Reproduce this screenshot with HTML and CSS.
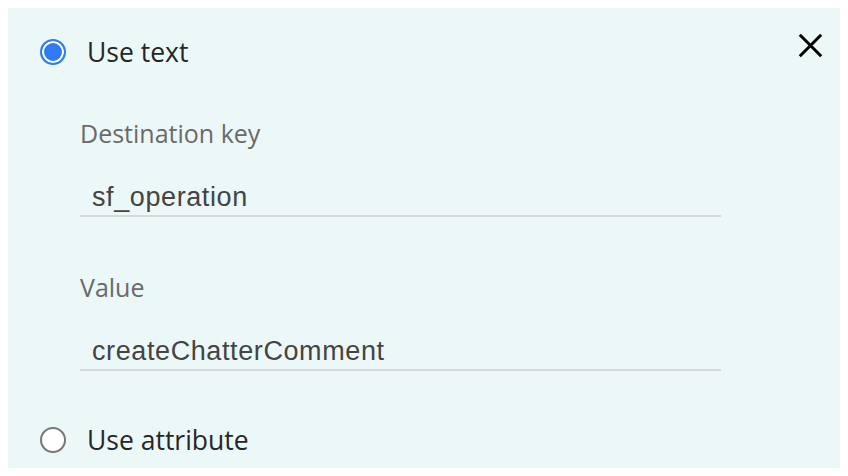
FILE: index.html
```html
<!DOCTYPE html>
<html lang="en">
<head>
<meta charset="utf-8">
<title>Use text</title>
<link rel="stylesheet" href="styles.css">
</head>
<body>
<div class="panel">
  <div class="option-row">
    <label class="option">
      <span class="radio radio-checked"></span>
      <span class="option-text">Use text</span>
    </label>
    <button class="close" aria-label="Close">
      <svg width="25" height="25" viewBox="0 0 25 25"><path d="M1.8 1.8 L23.2 23.2 M23.2 1.8 L1.8 23.2" stroke="#000" stroke-width="3" fill="none"/></svg>
    </button>
  </div>
  <div class="fields">
    <div class="field">
      <div class="field-label">Destination key</div>
      <input class="field-input" type="text" value="sf_operation" readonly>
    </div>
    <div class="field field-second">
      <div class="field-label">Value</div>
      <input class="field-input" type="text" value="createChatterComment" readonly>
    </div>
  </div>
  <div class="option-row option-last">
    <label class="option">
      <span class="radio"></span>
      <span class="option-text">Use attribute</span>
    </label>
  </div>
</div>
</body>
</html>
```

FILE: styles.css
```css
html, body {
  margin: 0;
  padding: 0;
  background: #ffffff;
}
body {
  margin: 8px;
}
.panel {
  box-sizing: border-box;
  width: 832px;
  height: 460px;
  background: #ecf8f8;
  padding: 26px 17px 0 32px;
}
.option-row {
  display: flex;
  align-items: center;
  justify-content: space-between;
  height: 36px;
}
.option {
  display: flex;
  align-items: center;
  gap: 21px;
}
.radio {
  box-sizing: border-box;
  width: 26px;
  height: 26px;
  border-radius: 50%;
  border: 2px solid #767676;
  background: #ffffff;
  flex: none;
}
.radio-checked {
  border: 2.7px solid #2f7bf5;
  background: #2f7bf5;
  box-shadow: inset 0 0 0 2px #ffffff;
}
.option-text {
  font-family: "Open Sans", sans-serif;
  font-size: 26.5px;
  font-weight: 500;
  line-height: 36px;
  color: #262626;
}
.close {
  border: none;
  background: transparent;
  padding: 0;
  margin: 0;
  width: 25px;
  height: 25px;
  display: flex;
  margin-top: -14px;
}
.fields {
  padding-left: 40px;
  margin-top: 46px;
  width: 641px;
}
.field {
  display: flex;
  flex-direction: column;
}
.field-second {
  margin-top: 53px;
}
.field-label {
  font-family: "Open Sans", sans-serif;
  font-size: 25px;
  line-height: 34px;
  color: #6a6a6a;
  margin-bottom: 29px;
}
.field-input {
  box-sizing: border-box;
  width: 641px;
  height: 38px;
  margin: 0;
  border: none;
  border-bottom: 2px solid #d7dada;
  background: transparent;
  padding: 0 12px;
  font-family: "Liberation Sans", Arial, sans-serif;
  font-size: 27px;
  letter-spacing: 0.6px;
  color: #444444;
  outline: none;
}
.option-last {
  margin-top: 51px;
}
```
